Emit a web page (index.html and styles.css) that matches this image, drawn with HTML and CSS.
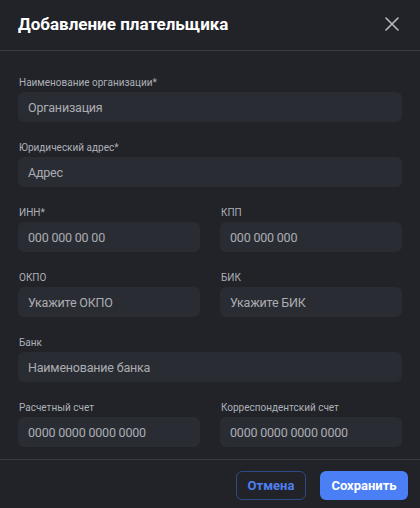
FILE: index.html
```html
<!DOCTYPE html>
<html lang="ru">
<head>
<meta charset="utf-8">
<link rel="stylesheet" href="styles.css">
</head>
<body>
<div class="modal">
  <header class="modal-header">
    <h1 class="modal-title">Добавление плательщика</h1>
    <button class="close-btn" aria-label="Закрыть">
      <svg width="14" height="14" viewBox="0 0 14 14"><path d="M1 1L13 13M13 1L1 13" stroke="#b9bbc1" stroke-width="1.6" stroke-linecap="round"/></svg>
    </button>
  </header>
  <div class="modal-body">
    <div class="field">
      <label class="label">Наименование организации*</label>
      <div class="input">Организация</div>
    </div>
    <div class="field">
      <label class="label">Юридический адрес*</label>
      <div class="input">Адрес</div>
    </div>
    <div class="row">
      <div class="field">
        <label class="label">ИНН*</label>
        <div class="input">000 000 00 00</div>
      </div>
      <div class="field">
        <label class="label">КПП</label>
        <div class="input">000 000 000</div>
      </div>
    </div>
    <div class="row">
      <div class="field">
        <label class="label">ОКПО</label>
        <div class="input">Укажите ОКПО</div>
      </div>
      <div class="field">
        <label class="label">БИК</label>
        <div class="input">Укажите БИК</div>
      </div>
    </div>
    <div class="field">
      <label class="label">Банк</label>
      <div class="input">Наименование банка</div>
    </div>
    <div class="row">
      <div class="field">
        <label class="label">Расчетный счет</label>
        <div class="input">0000 0000 0000 0000</div>
      </div>
      <div class="field">
        <label class="label">Корреспондентский счет</label>
        <div class="input">0000 0000 0000 0000</div>
      </div>
    </div>
  </div>
  <footer class="modal-footer">
    <button class="btn btn-outline">Отмена</button>
    <button class="btn btn-primary">Сохранить</button>
  </footer>
</div>
</body>
</html>
```
FILE: styles.css
```css
* { box-sizing: border-box; }
html, body { margin: 0; padding: 0; }
body {
  background: #212329;
  font-family: Roboto, "Noto Sans", "Liberation Sans", sans-serif;
  width: 420px;
  height: 508px;
  overflow: hidden;
}
.modal {
  width: 420px;
  height: 508px;
  display: flex;
  flex-direction: column;
  background: #212329;
}
.modal-header {
  height: 51px;
  flex: none;
  display: flex;
  align-items: center;
  justify-content: space-between;
  padding: 0 21px 2px 18px;
  border-bottom: 1px solid #383a41;
}
.modal-title {
  margin: 0;
  font-size: 17px;
  font-weight: 700;
  color: #ffffff;
}
.close-btn {
  background: none;
  border: none;
  padding: 0;
  width: 14px;
  height: 14px;
  display: flex;
}
.modal-body {
  flex: 1;
  overflow: hidden;
  padding: 26px 18px 0 18px;
  display: flex;
  flex-direction: column;
  gap: 20px;
}
.row {
  display: grid;
  grid-template-columns: 1fr 1fr;
  column-gap: 20px;
}
.field {
  display: flex;
  flex-direction: column;
}
.label {
  font-size: 10px;
  line-height: 12px;
  color: #aeb0b7;
  margin-bottom: 3px;
  padding-left: 1px;
}
.input {
  height: 30px;
  background: #2a2c33;
  border-radius: 6px;
  padding: 0 10px;
  display: flex;
  align-items: center;
  font-size: 12.5px;
  font-weight: 400;
  color: #aaacb2;
  letter-spacing: -0.2px;
}
.modal-footer {
  flex: none;
  height: 49px;
  border-top: 1px solid #383a41;
  display: flex;
  justify-content: flex-end;
  align-items: flex-start;
  padding: 11px 12px 0 0;
  gap: 14px;
}
.btn {
  height: 29px;
  border-radius: 6px;
  font-family: inherit;
  font-size: 13px;
  font-weight: 700;
  padding: 0;
  cursor: pointer;
}
.btn-outline {
  width: 70px;
  background: transparent;
  border: 1px solid #2e4a86;
  color: #4f7ff0;
}
.btn-primary {
  width: 88px;
  background: #4b7ff5;
  border: none;
  color: #ffffff;
}
```
